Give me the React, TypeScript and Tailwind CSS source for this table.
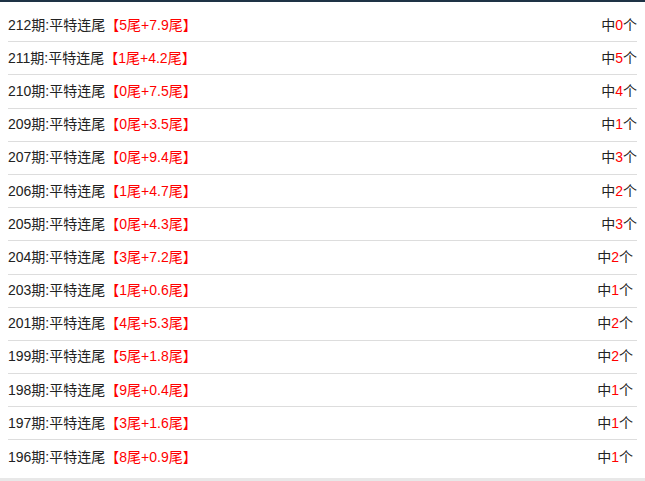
import React from "react";

const rows: [string, string, string, boolean][] = [
  ["212", "5尾+7.9尾", "0", false],
  ["211", "1尾+4.2尾", "5", false],
  ["210", "0尾+7.5尾", "4", false],
  ["209", "0尾+3.5尾", "1", false],
  ["207", "0尾+9.4尾", "3", false],
  ["206", "1尾+4.7尾", "2", false],
  ["205", "0尾+4.3尾", "3", false],
  ["204", "3尾+7.2尾", "2", true],
  ["203", "1尾+0.6尾", "1", true],
  ["201", "4尾+5.3尾", "2", true],
  ["199", "5尾+1.8尾", "2", true],
  ["198", "9尾+0.4尾", "1", true],
  ["197", "3尾+1.6尾", "1", true],
  ["196", "8尾+0.9尾", "1", true],
];

export default function App() {
  return (
    <div
      className="w-[645px] h-[481px] bg-white overflow-hidden flex flex-col text-[14px] text-[#222]"
      style={{ fontFamily: '"Liberation Sans", "Noto Sans CJK SC", sans-serif' }}
    >
      <div className="h-[2px] bg-[#1e3245] shrink-0" />
      <div className="flex-1 flex flex-col pt-[7px] px-[8px]">
        {rows.map(([p, t, n, shift], i) => (
          <div
            key={p}
            className={`h-[33.2px] shrink-0 flex items-center justify-between ${
              i < rows.length - 1 ? "border-b border-[#dddddd]" : ""
            }`}
          >
            <span>
              {p}期:平特连尾<span className="text-[#ff0000]">【{t}】</span>
            </span>
            <span className={shift ? "pr-[4px]" : ""}>
              中<span className="text-[#ff0000]">{n}</span>个
            </span>
          </div>
        ))}
      </div>
      <div className="h-[3px] bg-[#e8e8e8] shrink-0" />
    </div>
  );
}
